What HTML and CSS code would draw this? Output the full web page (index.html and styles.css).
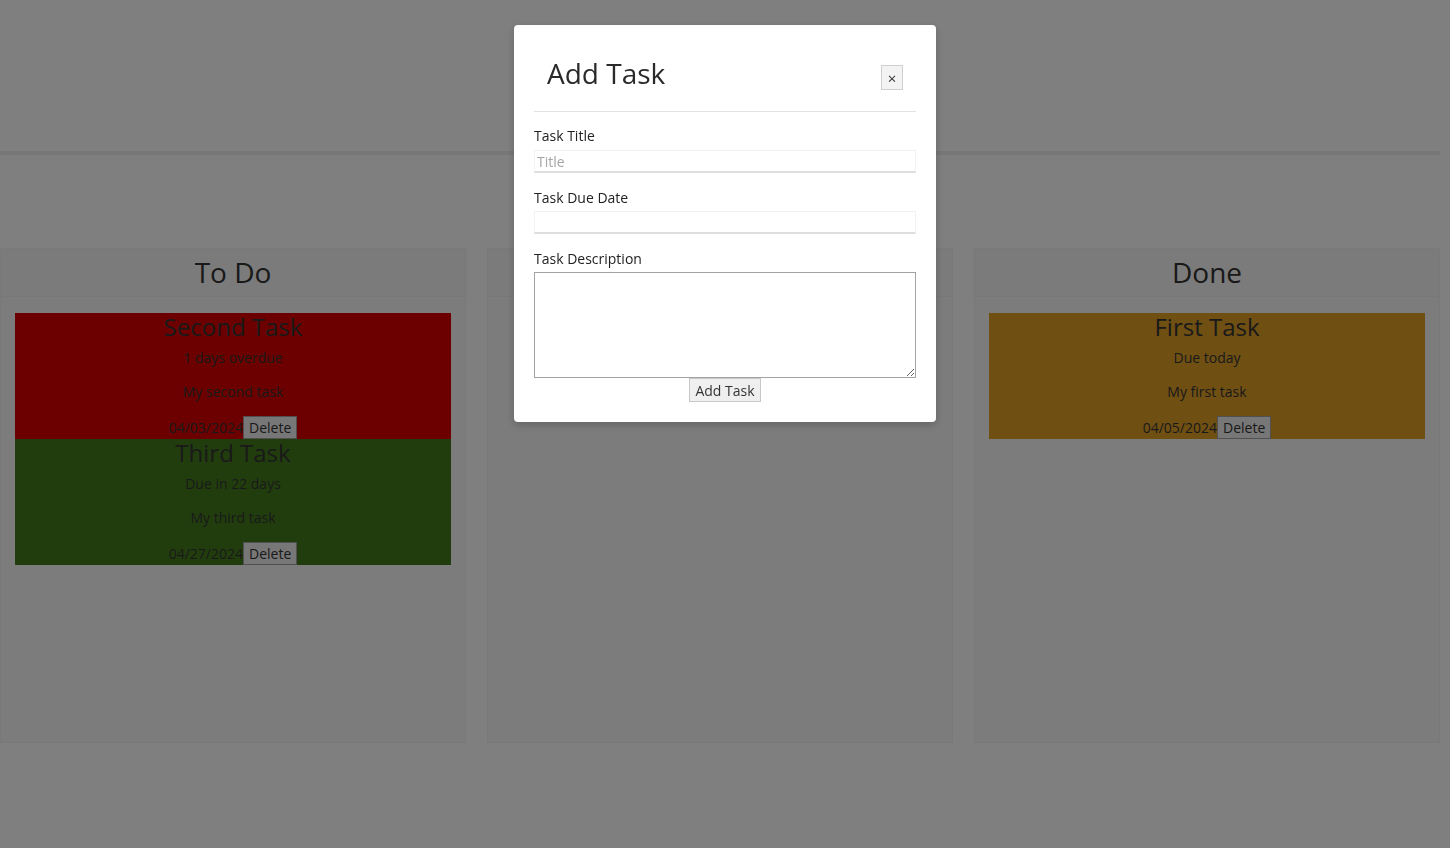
FILE: index.html
```html
<!DOCTYPE html>
<html lang="en">
<head>
<meta charset="utf-8">
<title>Task Board</title>
<link rel="stylesheet" href="styles.css">
</head>
<body>
<header class="page-header"></header>

<main class="board">
  <section class="lane">
    <h3 class="lane-title">To Do</h3>
    <div class="lane-body">
      <article class="task task-overdue">
        <h4 class="task-title">Second Task</h4>
        <p class="task-text">1 days overdue</p>
        <p class="task-text">My second task</p>
        <div class="task-foot"><span>04/03/2024</span><button class="btn">Delete</button></div>
      </article>
      <article class="task task-future">
        <h4 class="task-title">Third Task</h4>
        <p class="task-text">Due in 22 days</p>
        <p class="task-text">My third task</p>
        <div class="task-foot"><span>04/27/2024</span><button class="btn">Delete</button></div>
      </article>
    </div>
  </section>
  <section class="lane">
    <h3 class="lane-title">In Progress</h3>
    <div class="lane-body"></div>
  </section>
  <section class="lane">
    <h3 class="lane-title">Done</h3>
    <div class="lane-body">
      <article class="task task-today">
        <h4 class="task-title">First Task</h4>
        <p class="task-text">Due today</p>
        <p class="task-text">My first task</p>
        <div class="task-foot"><span>04/05/2024</span><button class="btn">Delete</button></div>
      </article>
    </div>
  </section>
</main>

<div class="backdrop"></div>

<div class="modal">
  <div class="modal-header">
    <h2 class="modal-title">Add Task</h2>
    <button class="btn close-btn">×</button>
  </div>
  <form class="modal-form">
    <label class="field-label" for="t">Task Title</label>
    <input class="field" id="t" type="text" placeholder="Title">
    <label class="field-label" for="d">Task Due Date</label>
    <input class="field" id="d" type="text">
    <label class="field-label" for="desc">Task Description</label>
    <textarea class="area" id="desc"></textarea>
    <div class="form-actions"><button class="btn add-btn" type="button">Add Task</button></div>
  </form>
</div>
</body>
</html>
```

FILE: styles.css
```css
* { box-sizing: border-box; }

html, body {
  margin: 0;
  height: 100%;
}

body {
  font-family: "Open Sans", "Noto Sans", sans-serif;
  font-size: 14px;
  line-height: 20px;
  color: #333;
  background: #fff;
  padding-right: 10px;
  overflow: hidden;
}

.page-header {
  height: 155px;
  border-bottom: 4px solid #eeeeee;
}

.board {
  display: flex;
  gap: 21px;
  margin-top: 93px;
}

.lane {
  flex: 1;
  height: 495px;
  background: #f9f9f9;
  border: 1px solid #f3f3f3;
  display: flex;
  flex-direction: column;
}

.lane-title {
  margin: 0;
  height: 48px;
  padding-bottom: 2px;
  display: flex;
  align-items: center;
  justify-content: center;
  font-size: 28px;
  font-weight: 400;
  background: #f6f6f6;
  border-bottom: 1px solid #f1f1f1;
}

.lane-body {
  padding: 16px 14px 0 14px;
}

.task {
  height: 126px;
  text-align: center;
}

.task-overdue { background: #d80000; }
.task-future { background: #437b1b; }
.task-today { background: #e19f27; }

.task-title {
  margin: 0 0 7px;
  font-size: 24px;
  font-weight: 400;
  line-height: 28px;
}

.task-text {
  margin: 0 0 14px;
}

.task-foot {
  height: 23px;
  display: flex;
  justify-content: center;
  align-items: center;
}

.btn {
  font-family: "Open Sans", "Noto Sans", sans-serif;
  font-size: 14px;
  line-height: 19px;
  color: #333;
  background: #efefef;
  border: 1px solid #a0a0a0;
  border-radius: 0;
  padding: 1px 5px;
  margin: 0;
}

.backdrop {
  position: fixed;
  inset: 0;
  background: rgba(0, 0, 0, 0.5);
}

.modal {
  position: fixed;
  top: 25px;
  left: 50%;
  width: 422px;
  margin-left: -211px;
  background: #fff;
  border-radius: 4px;
  padding: 20px 20px 20px 20px;
  box-shadow: 0 3px 9px rgba(0, 0, 0, 0.2);
}

.modal-header {
  display: flex;
  align-items: flex-start;
  justify-content: space-between;
  padding: 13px 13px 21px 13px;
  border-bottom: 1px solid #e2e2e2;
}

.modal-title {
  margin: 0;
  font-size: 28px;
  font-weight: 400;
  line-height: 31px;
  color: #2a2a2a;
}

.close-btn {
  margin-top: 7px;
  width: 22px;
  height: 25px;
  padding: 0;
  font-size: 15px;
  line-height: 22px;
  border-color: #cfcfcf;
  background: #f3f3f3;
}

.modal-form {
  padding-top: 14px;
}

.field-label {
  display: block;
  margin-bottom: 4px;
  color: #222;
}

.field {
  display: block;
  width: 100%;
  height: 23px;
  margin: 0 0 15px;
  padding: 0 2px;
  border: 1px solid #f2f2f2;
  border-bottom: 2px solid #dedede;
  font-family: "Open Sans", "Noto Sans", sans-serif;
  font-size: 14px;
  color: #333;
  background: #fff;
  outline: none;
}

.field::placeholder { color: #a5a5a5; }

.field + .field-label { margin-bottom: 3px; }

.area {
  display: block;
  width: 100%;
  height: 106px;
  margin: 0;
  border: 1px solid #a3a3a3;
  font-family: "Open Sans", "Noto Sans", sans-serif;
  font-size: 14px;
  resize: both;
}

.form-actions {
  display: flex;
  justify-content: center;
}

.add-btn {
  height: 24px;
  padding: 1px 5px;
  border-color: #c8c8c8;
}
```
